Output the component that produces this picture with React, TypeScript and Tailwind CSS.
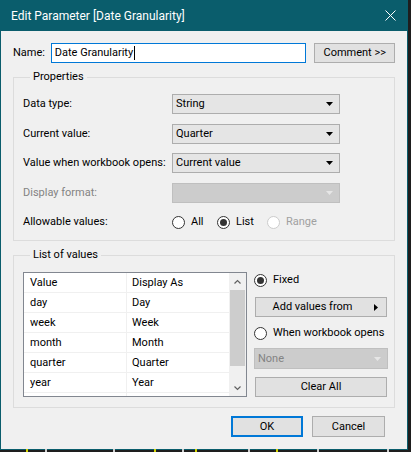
const ticks = [
  { x: 26, c: "bg-[#d4d400]" },
  { x: 45, c: "bg-[#cfcfcf]" },
  { x: 113, c: "bg-[#cfcfcf]" },
  { x: 154, c: "bg-[#d4d400]" },
  { x: 182, c: "bg-[#cfcfcf]" },
  { x: 195, c: "bg-[#d4d400]" },
  { x: 248, c: "bg-[#cfcfcf]" },
  { x: 276, c: "bg-[#d4d400]" },
  { x: 317, c: "bg-[#cfcfcf]" },
  { x: 387, c: "bg-[#cfcfcf]" },
];

const rows = [
  ["day", "Day"],
  ["week", "Week"],
  ["month", "Month"],
  ["quarter", "Quarter"],
  ["year", "Year"],
  ["", ""],
];

function Arrow({ light }: { light?: boolean }) {
  return (
    <svg width="7" height="4" viewBox="0 0 7 4">
      <path d="M0 0h7L3.5 4z" fill={light ? "#e6e6e6" : "#000"} />
    </svg>
  );
}

function Radio({ checked, disabled }: { checked?: boolean; disabled?: boolean }) {
  return (
    <span
      className={`flex h-[13px] w-[13px] shrink-0 items-center justify-center rounded-full border bg-white ${
        disabled ? "border-[#cccccc]" : "border-[#333333]"
      }`}
    >
      {checked && <span className="h-[7px] w-[7px] rounded-full bg-[#333333]" />}
    </span>
  );
}

function Select({ value, disabled, className = "" }: { value: string; disabled?: boolean; className?: string }) {
  return (
    <div
      className={`flex items-center justify-between border pl-[3px] pr-[6px] ${
        disabled ? "border-[#bfbfbf] bg-[#cccccc] text-[#838383]" : "border-[#adadad] bg-[#e5e5e5]"
      } ${className}`}
    >
      <span>{value}</span>
      <Arrow light={disabled} />
    </div>
  );
}

function Button({ children, className = "" }: { children: React.ReactNode; className?: string }) {
  return (
    <div className={`flex items-center justify-center border border-[#adadad] bg-[#e1e1e1] ${className}`}>
      {children}
    </div>
  );
}

export default function App() {
  return (
    <div className="relative h-[452px] w-[411px] overflow-hidden whitespace-nowrap bg-[#1e1e1e] font-['Roboto',sans-serif] text-[11px] leading-[16px] text-black">
      <div className="flex h-[450px] w-[408px] flex-col border-x border-b border-[#0a5d6c] bg-[#f0f0f0]">
        {/* title bar */}
        <div className="flex h-[31px] shrink-0 items-center justify-between bg-[#0a5d6c] pl-[10px] pr-[11px] text-[12px] text-white">
          <span>Edit Parameter [Date Granularity]</span>
          <svg width="11" height="11" viewBox="0 0 11 11">
            <path d="M0.5 0.5l10 10M10.5 0.5l-10 10" stroke="#fff" strokeWidth="1" />
          </svg>
        </div>

        <div className="flex flex-col px-[12px]">
          {/* name */}
          <div className="mt-[12px] flex h-[20px] items-center">
            <span className="w-[38px]">Name:</span>
            <div className="flex h-[20px] w-[257px] items-center border border-[#0078d7] bg-white pl-[3px]">
              <span>Date Granularity</span>
              <span className="ml-[1px] h-[14px] w-[1px] bg-black" />
            </div>
            <Button className="ml-[8px] h-[20px] w-[81px]">Comment &gt;&gt;</Button>
          </div>

          {/* properties */}
          <fieldset className="mt-[6px] border border-[#dcdcdc] pb-[8px] pl-[9px]">
            <legend className="ml-[7px] px-[3px]">Properties</legend>
            <div className="mt-[9px] grid grid-cols-[149px_168px] gap-y-[9.6px]">
              <span className="flex h-[20px] items-center">Data type:</span>
              <Select value="String" className="h-[20px]" />
              <span className="flex h-[20px] items-center">Current value:</span>
              <Select value="Quarter" className="h-[20px]" />
              <span className="flex h-[20px] items-center">Value when workbook opens:</span>
              <Select value="Current value" className="h-[20px]" />
              <span className="flex h-[20px] items-center text-[#838383]">Display format:</span>
              <Select value="" disabled className="h-[20px]" />
              <span className="flex h-[20px] items-center">Allowable values:</span>
              <div className="flex h-[20px] items-center">
                <Radio />
                <span className="ml-[6px] w-[26px]">All</span>
                <Radio checked />
                <span className="ml-[6px] w-[31px]">List</span>
                <Radio disabled />
                <span className="ml-[6px] text-[#a0a0a0]">Range</span>
              </div>
            </div>
          </fieldset>

          {/* list of values */}
          <fieldset className="mt-[6px] border border-[#dcdcdc] pb-[10px] pl-[9px]">
            <legend className="ml-[7px] px-[3px]">List of values</legend>
            <div className="mt-[9px] flex">
              <div className="flex h-[125px] w-[224px] overflow-hidden border border-[#828790] bg-white">
                <div className="flex w-[206px] flex-col">
                  <div className="flex h-[20px] shrink-0 border-b border-[#f0f0f0]">
                    <span className="flex w-[103px] items-center border-r border-[#f0f0f0] pl-[6px]">Value</span>
                    <span className="flex flex-1 items-center pl-[5px]">Display As</span>
                  </div>
                  {rows.map(([v, d], i) => (
                    <div key={i} className="flex h-[20px] shrink-0 border-b border-[#f0f0f0]">
                      <span className="flex w-[103px] items-center border-r border-[#f0f0f0] pl-[6px]">{v}</span>
                      <span className="flex flex-1 items-center pl-[5px]">{d}</span>
                    </div>
                  ))}
                </div>
                <div className="flex w-[17px] flex-col items-center bg-[#f0f0f0]">
                  <svg className="mt-[6px]" width="7" height="5" viewBox="0 0 7 5">
                    <path d="M0.5 4.5L3.5 1.5L6.5 4.5" stroke="#606060" strokeWidth="1.2" fill="none" />
                  </svg>
                  <div className="mt-[6px] h-[76px] w-[15px] bg-[#cdcdcd]" />
                  <div className="flex-1" />
                  <svg className="mb-[5px]" width="7" height="5" viewBox="0 0 7 5">
                    <path d="M0.5 0.5L3.5 3.5L6.5 0.5" stroke="#606060" strokeWidth="1.2" fill="none" />
                  </svg>
                </div>
              </div>

              <div className="ml-[7px] flex w-[134px] flex-col">
                <div className="flex h-[16px] items-center">
                  <Radio checked />
                  <span className="ml-[6px]">Fixed</span>
                </div>
                <Button className="relative ml-[1px] mt-[9px] h-[20px] w-[132px] pr-[17px]">
                  <span>Add values from</span>
                  <svg className="absolute right-[8px] top-[6px]" width="4" height="7" viewBox="0 0 4 7">
                    <path d="M0 0v7l4-3.5z" fill="#000" />
                  </svg>
                </Button>
                <div className="mt-[8px] flex h-[16px] items-center">
                  <Radio />
                  <span className="ml-[6px]">When workbook opens</span>
                </div>
                <Select value="None" disabled className="mt-[7px] h-[21px] w-[134px]" />
                <Button className="ml-[1px] mt-[8px] h-[20px] w-[132px]">Clear All</Button>
              </div>
            </div>
          </fieldset>

          {/* footer */}
          <div className="mt-[8px] flex justify-end pr-[10px]">
            <div className="flex h-[21px] w-[72px] items-center justify-center border-2 border-[#0078d7] bg-[#e1e1e1]">OK</div>
            <Button className="ml-[9px] h-[21px] w-[73px]">Cancel</Button>
          </div>
        </div>
      </div>

      <div className="absolute bottom-0 left-0 h-[3px] w-[411px]">
        {ticks.map((t) => (
          <span key={t.x} className={`absolute top-0 h-[3px] w-[2px] ${t.c}`} style={{ left: t.x }} />
        ))}
      </div>
    </div>
  );
}
